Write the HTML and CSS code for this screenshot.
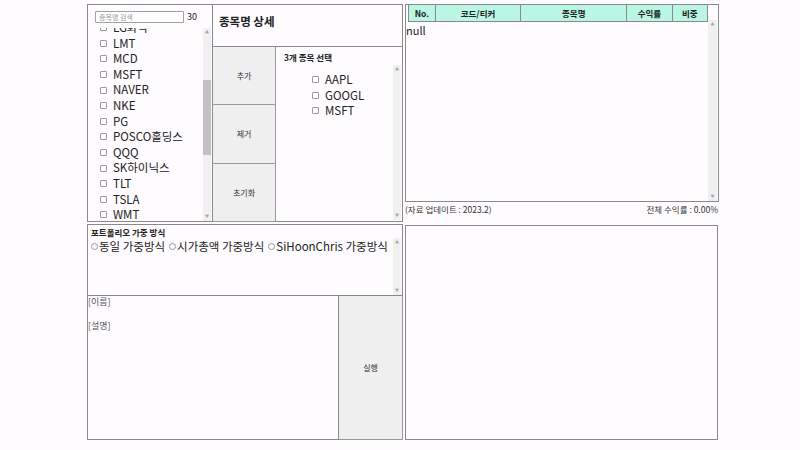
FILE: index.html
```html
<!DOCTYPE html>
<html>

<head>
  <title>포트폴리오 구성</title>
  <link rel="stylesheet" href="styles.css">
</head>

<body>
  <div class="page">
    <!-- 왼쪽 영역 -->
    <div class="left">
      <div class="top-row">
        <div class="stock-panel">
          <div class="search-row">
            <input type="text" class="search" placeholder="종목명 검색">
            <span class="count">30</span>
          </div>
          <div class="list-wrap">
            <ul class="stock-list">
              <li><span class="box"></span>LG화학</li>
              <li><span class="box"></span>LMT</li>
              <li><span class="box"></span>MCD</li>
              <li><span class="box"></span>MSFT</li>
              <li><span class="box"></span>NAVER</li>
              <li><span class="box"></span>NKE</li>
              <li><span class="box"></span>PG</li>
              <li><span class="box"></span>POSCO홀딩스</li>
              <li><span class="box"></span>QQQ</li>
              <li><span class="box"></span>SK하이닉스</li>
              <li><span class="box"></span>TLT</li>
              <li><span class="box"></span>TSLA</li>
              <li><span class="box"></span>WMT</li>
            </ul>
            <div class="scrollbar">
              <span class="arrow">&#9650;</span>
              <div class="track"><div class="thumb"></div></div>
              <span class="arrow">&#9660;</span>
            </div>
          </div>
        </div>

        <div class="detail-area">
          <div class="detail-title">종목명 상세</div>
          <div class="detail-body">
            <div class="buttons">
              <button>추가</button>
              <button>제거</button>
              <button>초기화</button>
            </div>
            <div class="selected">
              <div class="selected-title">3개 종목 선택</div>
              <div class="selected-wrap">
                <ul class="selected-list">
                  <li><span class="box"></span>AAPL</li>
                  <li><span class="box"></span>GOOGL</li>
                  <li><span class="box"></span>MSFT</li>
                </ul>
                <div class="scrollbar">
                  <span class="arrow">&#9650;</span>
                  <div class="track"></div>
                  <span class="arrow">&#9660;</span>
                </div>
              </div>
            </div>
          </div>
        </div>
      </div>

      <div class="weight-panel">
        <div class="weight-content">
          <div class="weight-title">포트폴리오 가중 방식</div>
          <div class="radios">
            <label><span class="radio"></span>동일 가중방식</label>
            <label><span class="radio"></span>시가총액 가중방식</label>
            <label><span class="radio"></span>SiHoonChris 가중방식</label>
          </div>
        </div>
        <div class="scrollbar">
          <span class="arrow">&#9650;</span>
          <div class="track"></div>
          <span class="arrow">&#9660;</span>
        </div>
      </div>

      <div class="bottom-row">
        <div class="info">
          <p>[이름]</p>
          <p class="desc">[설명]</p>
        </div>
        <button class="run">실행</button>
      </div>
    </div>

    <!-- 오른쪽 영역 -->
    <div class="right">
      <div class="table-panel">
        <div class="table-content">
          <table>
            <tr>
              <th class="c-no">No.</th>
              <th class="c-code">코드/티커</th>
              <th class="c-name">종목명</th>
              <th class="c-rate">수익률</th>
              <th class="c-weight">비중</th>
            </tr>
          </table>
          <div class="null">null</div>
        </div>
        <div class="scrollbar table-scroll">
          <span class="arrow">&#9650;</span>
          <div class="track"></div>
          <span class="arrow">&#9660;</span>
        </div>
      </div>
      <div class="table-footer">
        <span>(자료 업데이트 : 2023.2)</span>
        <span>전체 수익률 : 0.00%</span>
      </div>
      <div class="chart-panel"></div>
    </div>
  </div>
</body>

</html>
```

FILE: styles.css
```css
body {
  margin: 0;
  background-color: #fefcfe;
  font-family: "Noto Sans CJK KR", "Noto Sans", sans-serif;
  color: #222;
}

ul {
  list-style: none;
  margin: 0;
  padding: 0;
}

.page {
  display: flex;
  gap: 2px;
  padding: 4px 0 0 87px;
}

/* 왼쪽 */
.left {
  width: 316px;
  display: flex;
  flex-direction: column;
}

.top-row {
  display: flex;
  height: 218px;
}

.stock-panel {
  width: 126px;
  border: 1px solid #8a8a8a;
  box-sizing: border-box;
  display: flex;
  flex-direction: column;
}

.search-row {
  display: flex;
  align-items: center;
  padding: 4px 0 0 7px;
  height: 15px;
}

.search {
  width: 89px;
  height: 12px;
  box-sizing: border-box;
  border: 1px solid #a0a0a0;
  border-radius: 1px;
  font-size: 7px;
  padding: 0 3px;
  font-family: inherit;
}

.search::placeholder {
  color: #999;
}

.count {
  font-size: 9px;
  margin-left: 3px;
}

.list-wrap {
  flex: 1;
  display: flex;
  overflow: hidden;
  min-height: 0;
  margin-top: 4px;
}

.stock-list {
  flex: 1;
  overflow: hidden;
  padding-left: 12px;
}

.stock-list li,
.selected-list li {
  height: 15.6px;
  font-size: 11.5px;
  line-height: 15.6px;
  display: flex;
  align-items: center;
  white-space: nowrap;
}

.stock-list li:first-child {
  margin-top: -8px;
}

.box {
  width: 5px;
  height: 5px;
  border: 1px solid #999;
  border-radius: 1px;
  margin-right: 6px;
  background-color: #fff;
  flex-shrink: 0;
}

.scrollbar {
  width: 8px;
  background-color: #f0f0f0;
  display: flex;
  flex-direction: column;
  align-items: center;
  margin-right: 1px;
}

.arrow {
  font-size: 4px;
  color: #a3a3a3;
  height: 9px;
  line-height: 9px;
}

.track {
  flex: 1;
  width: 100%;
  position: relative;
}

.thumb {
  position: absolute;
  top: 43px;
  left: 0;
  width: 100%;
  height: 75px;
  background-color: #c1c1c1;
}

.detail-area {
  flex: 1;
  display: flex;
  flex-direction: column;
}

.detail-title {
  height: 43px;
  border: 1px solid #8a8a8a;
  border-left: none;
  box-sizing: border-box;
  font-size: 11.5px;
  font-weight: bold;
  padding: 8px 0 0 6px;
}

.detail-body {
  flex: 1;
  display: flex;
}

.buttons {
  width: 63px;
  display: flex;
  flex-direction: column;
}

.buttons button {
  flex: 1;
  background-color: #efefef;
  border: 1px solid #9a9a9a;
  border-top: none;
  border-left: none;
  font-size: 8px;
  font-family: inherit;
  color: #333;
  padding: 0;
}

.selected {
  flex: 1;
  border: 1px solid #8a8a8a;
  border-top: none;
  border-left: none;
  display: flex;
  flex-direction: column;
}

.selected-title {
  font-size: 8.5px;
  font-weight: bold;
  padding: 4px 0 0 8px;
  height: 14px;
}

.selected-wrap {
  flex: 1;
  display: flex;
  margin-bottom: 1px;
}

.selected-list {
  flex: 1;
  padding: 7px 0 0 36px;
}

/* 가중 방식 */
.weight-panel {
  height: 72px;
  margin-top: 2px;
  border: 1px solid #8a8a8a;
  box-sizing: border-box;
  display: flex;
}

.weight-content {
  flex: 1;
}

.weight-title {
  font-size: 8.5px;
  font-weight: bold;
  padding: 1px 0 0 3px;
}

.radios {
  display: flex;
  gap: 4px;
  padding-left: 3px;
  font-size: 11.5px;
  white-space: nowrap;
}

.radios label {
  display: flex;
  align-items: center;
}

.radio {
  width: 5px;
  height: 5px;
  border: 1px solid #999;
  border-radius: 50%;
  margin-right: 1px;
}

.weight-panel .scrollbar {
  margin: 13px 1px 0 0;
}

.bottom-row {
  display: flex;
  height: 144px;
}

.info {
  width: 252px;
  border: 1px solid #8a8a8a;
  border-top: none;
  box-sizing: border-box;
  font-size: 9px;
  color: #555;
}

.info p {
  margin: 0;
  line-height: 12px;
}

.desc {
  margin-top: 12px !important;
}

.run {
  flex: 1;
  background-color: #efefef;
  border: 1px solid #9a9a9a;
  border-top: none;
  border-left: none;
  font-size: 8px;
  font-family: inherit;
  color: #333;
  padding: 0;
}

/* 오른쪽 */
.right {
  width: 314px;
  display: flex;
  flex-direction: column;
}

.table-panel {
  height: 198px;
  border: 1px solid #8a8a8a;
  box-sizing: border-box;
  display: flex;
}

.table-content {
  flex: 1;
}

table {
  border-collapse: collapse;
  margin: -1px 0 0 2px;
}

th {
  height: 16px;
  padding: 0;
  background-color: #b9f6e3;
  border: 1px solid #8a8a8a;
  font-size: 8.5px;
  font-weight: bold;
  color: #222;
}

.c-no { width: 26px; }
.c-code { width: 86px; }
.c-name { width: 107px; }
.c-rate { width: 45px; }
.c-weight { width: 35px; }

.null {
  font-size: 11px;
  line-height: 14px;
  padding-top: 1px;
  color: #222;
}

.table-scroll {
  margin-top: 15px;
  width: 9px;
}

.table-footer {
  display: flex;
  justify-content: space-between;
  font-size: 8.5px;
  color: #333;
  padding: 1px 1px 0 0;
  height: 22px;
}

.chart-panel {
  height: 215px;
  border: 1px solid #8a8a8a;
  box-sizing: border-box;
  width: 313px;
  background-color: #fefcfe;
}
```
